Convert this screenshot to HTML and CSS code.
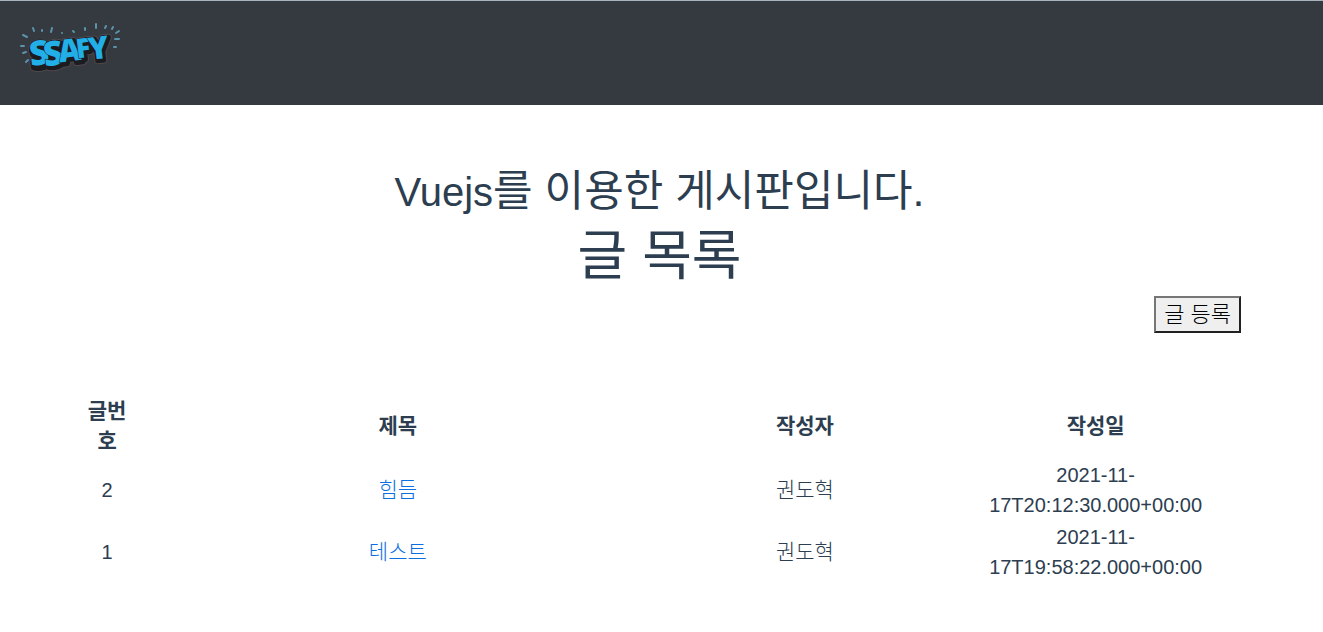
FILE: index.html
```html
<!DOCTYPE html>
<html lang="ko">
<head>
<meta charset="utf-8">
<meta name="viewport" content="width=device-width, initial-scale=1">
<title>글 목록</title>
<link rel="stylesheet" href="styles.css">
</head>
<body>
<header class="navbar">
  <a class="brand" href="#" aria-label="SSAFY">
    <svg class="logo" viewBox="0 0 104 56" width="104" height="56">
      <g class="rays">
        <path d="M13 8l1 3M22 10l0 1M31 12l1-4M42 13v0M53 11l1 1M65 8l0 2M76 4v4M85 8l1-2M92 9l1-2M96 13l3-2M95 19h4M94 27l2 0M3 15l4 2M1 26h3M3 33l3-1M6 42l2-2"/>
      </g>
      <g class="letters letters-rim">
        <text transform="rotate(-7 20 48)"><tspan class="tall" x="12 26" y="48 49">SS</tspan><tspan class="mid" x="41" y="47">A</tspan><tspan class="small" x="59" y="45">F</tspan><tspan class="mid" x="71" y="48">Y</tspan></text>
      </g>
      <g class="letters letters-shadow">
        <text transform="rotate(-7 20 48)"><tspan class="tall" x="12 26" y="48 49">SS</tspan><tspan class="mid" x="41" y="47">A</tspan><tspan class="small" x="59" y="45">F</tspan><tspan class="mid" x="71" y="48">Y</tspan></text>
      </g>
      <g class="letters letters-face">
        <text transform="rotate(-7 20 48)"><tspan class="tall" x="11 25" y="45 47">SS</tspan><tspan class="mid" x="40" y="45">A</tspan><tspan class="small" x="58" y="43">F</tspan><tspan class="mid" x="70" y="46">Y</tspan></text>
      </g>
    </svg>
  </a>
</header>
<main class="page">
  <h1 class="title">Vuejs<span class="title-ko">를 이용한 게시판입니다.</span></h1>
  <h2 class="subtitle">글 목록</h2>
  <div class="actions"><button class="write" type="button">글 등록</button></div>
  <table class="board">
    <colgroup><col class="col-no"><col class="col-title"><col class="col-author"><col class="col-date"></colgroup>
    <thead>
      <tr><th scope="col">글번호</th><th scope="col">제목</th><th scope="col">작성자</th><th scope="col">작성일</th></tr>
    </thead>
    <tbody>
      <tr><td>2</td><td class="ko"><a href="#">힘듬</a></td><td class="ko">권도혁</td><td class="date">2021-11-17T20:12:30.000+00:00</td></tr>
      <tr><td>1</td><td class="ko"><a href="#">테스트</a></td><td class="ko">권도혁</td><td class="date">2021-11-17T19:58:22.000+00:00</td></tr>
    </tbody>
  </table>
</main>
</body>
</html>
```
FILE: styles.css
```css
* { box-sizing: border-box; }
body {
  margin: 0;
  background: #fff;
  color: #2c3e50;
  font-family: "Liberation Sans", "Noto Sans CJK KR", sans-serif;
  font-size: 20px;
  line-height: 30px;
}
.navbar {
  display: flex;
  border-top: 1px solid #a9b3bd;
  background: #353940;
  padding: 19px 20px 29px;
}
.brand { display: block; }
.logo { display: block; overflow: visible; }
.rays path { fill: none; stroke: #5a93aa; stroke-width: 2; stroke-linecap: round; }
.letters {
  font-family: "Open Sans", "Noto Sans", sans-serif;
  font-weight: 800;
  stroke-linejoin: round;
  paint-order: stroke;
}
.tall { font-size: 34px; }
.mid { font-size: 31px; }
.small { font-size: 27px; }
.letters-rim { fill: #4e494b; stroke: #4e494b; stroke-width: 7; }
.letters-shadow { fill: #1c1b20; stroke: #1c1b20; stroke-width: 5; }
.letters-face { fill: #22aee6; stroke: #1c1b20; stroke-width: 1; }
.page { padding: 62px 82px 0 78px; text-align: center; }
.title, .subtitle { margin: 0; font-weight: 400; }
.title { font-size: 40px; line-height: 48px; }
.title-ko { font-size: 43px; }
.subtitle { margin-top: 8px; font-size: 54px; line-height: 64px; }
.actions { display: flex; justify-content: flex-end; margin-top: 8px; }
.write {
  border: 2px solid;
  border-color: #767676 #212121 #212121 #767676;
  background: #efefef;
  color: #000;
  padding: 0 8px;
  font: 300 22px/33px "Liberation Sans", "Noto Sans CJK KR", sans-serif;
}
.board { width: 100%; margin-top: 62px; border-collapse: collapse; table-layout: fixed; }
.board th, .board td { padding: 1px; vertical-align: middle; }
.board th { padding-bottom: 3px; font-size: 21px; font-weight: 700; }
.board .ko { font-size: 21px; font-weight: 300; }
.board .date { padding: 1px 24px; }
.board a { color: #0d6fdf; text-decoration: none; }
.col-no { width: 5%; }
.col-title { width: 45%; }
.col-author { width: 25%; }
.col-date { width: 25%; }
```
